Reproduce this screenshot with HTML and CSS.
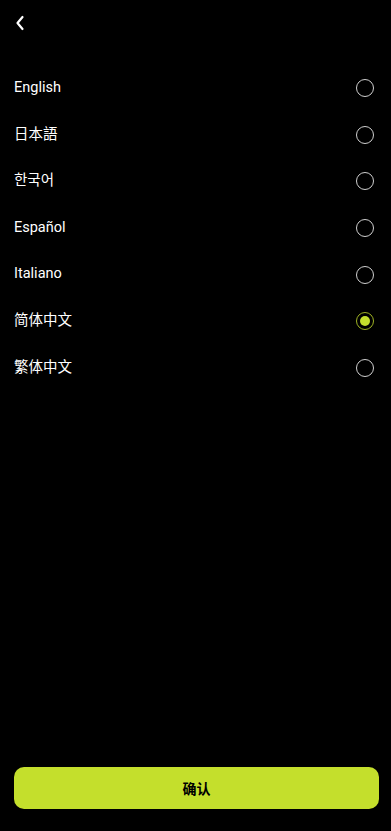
FILE: index.html
```html
<!DOCTYPE html>
<html lang="zh">
<head>
<meta charset="utf-8">
<meta name="viewport" content="width=device-width, initial-scale=1">
<link rel="stylesheet" href="styles.css">
</head>
<body>
<div class="page">
  <header class="topbar">
    <svg class="back" width="10" height="16" viewBox="0 0 10 16"><path d="M7.5 2 L2.5 8 L7.5 14" fill="none" stroke="#fff" stroke-width="2.2" stroke-linecap="round" stroke-linejoin="round"/></svg>
  </header>
  <ul class="list">
    <li class="row"><span class="label">English</span><span class="radio"></span></li>
    <li class="row"><span class="label">日本語</span><span class="radio"></span></li>
    <li class="row"><span class="label">한국어</span><span class="radio"></span></li>
    <li class="row"><span class="label">Español</span><span class="radio"></span></li>
    <li class="row"><span class="label">Italiano</span><span class="radio"></span></li>
    <li class="row"><span class="label">简体中文</span><span class="radio on"></span></li>
    <li class="row"><span class="label">繁体中文</span><span class="radio"></span></li>
  </ul>
  <div class="spacer"></div>
  <button class="confirm">确认</button>
</div>
</body>
</html>
```
FILE: styles.css
```css
html, body { margin: 0; padding: 0; background: #000; }
body { font-family: Roboto, "Noto Sans CJK SC", sans-serif; color: #fff; }
.page { min-height: 831px; display: flex; flex-direction: column; box-sizing: border-box; padding: 0 12px 22px 14px; }
.topbar { height: 65px; display: flex; align-items: flex-start; padding-top: 15px; box-sizing: border-box; }
.back { display: block; margin-left: 1px; }
.list { list-style: none; margin: 0; padding: 0; }
.row { height: 46.6px; display: flex; align-items: center; justify-content: space-between; }
.label { font-size: 14.5px; line-height: 1; }
.radio { width: 16px; height: 16px; border: 1.3px solid #d0d0d0; border-radius: 50%; margin-right: 5px; display: flex; align-items: center; justify-content: center; }
.radio.on { border-color: #9fb323; }
.radio.on::after { content: ""; width: 10px; height: 10px; border-radius: 50%; background: #c5df2d; }
.spacer { flex: 1; }
.confirm { height: 42px; width: 100%; border: none; border-radius: 10px; background: #c4df2c; color: #000; font-family: "Noto Sans CJK SC", sans-serif; font-weight: 700; font-size: 14px; }
```
